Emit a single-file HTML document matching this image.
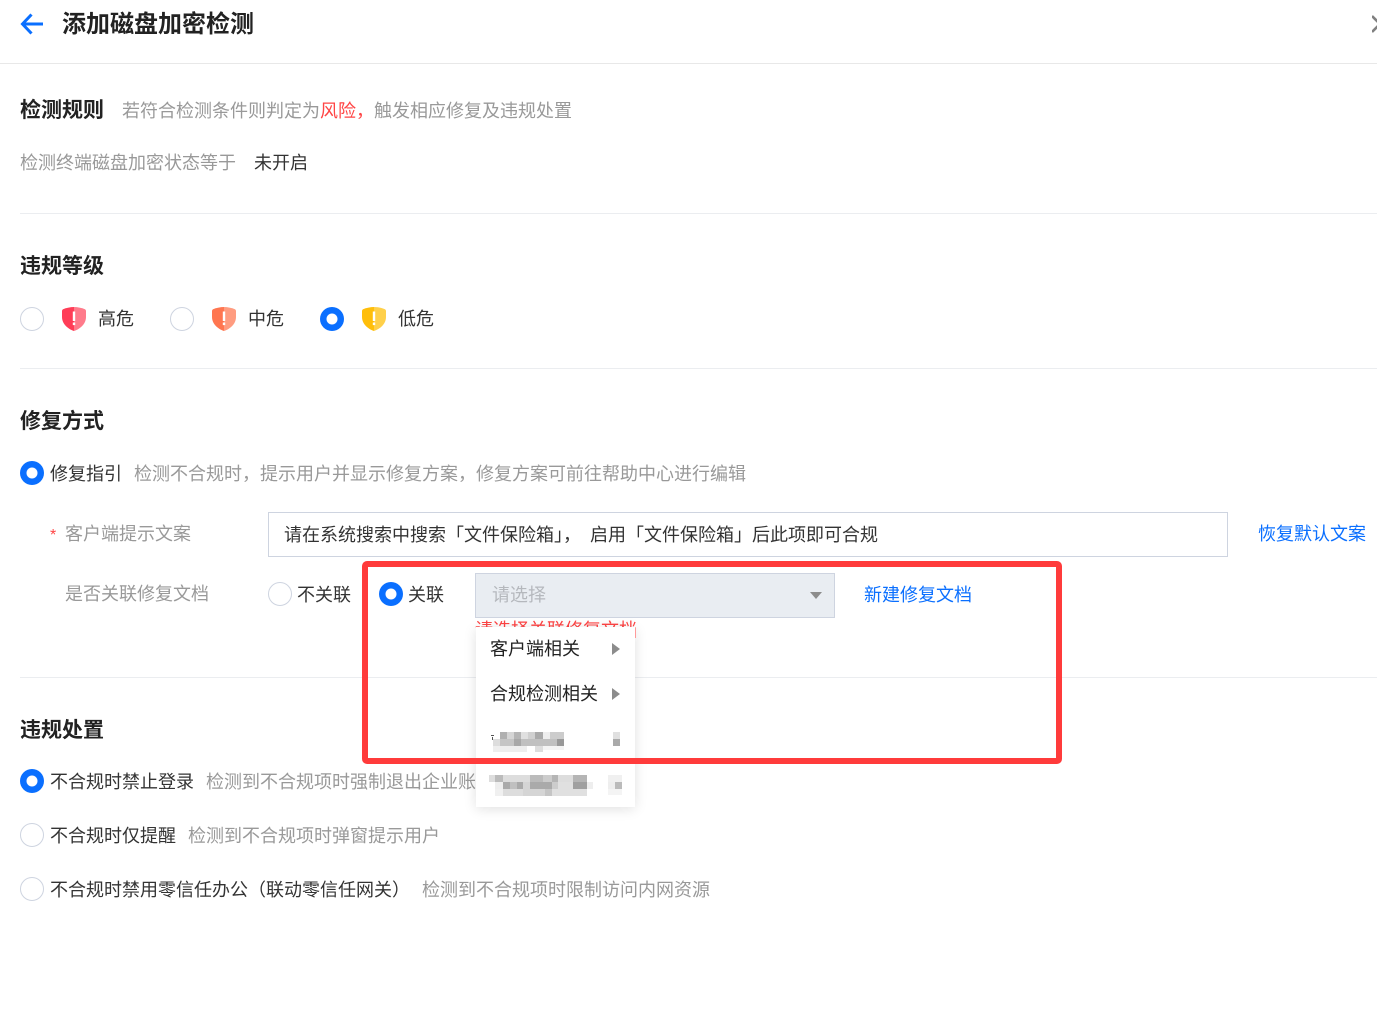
<!DOCTYPE html>
<html lang="zh-CN">
<head>
<meta charset="utf-8">
<title>添加磁盘加密检测</title>
<style>
html,body{margin:0;padding:0;background:#fff;}
body{width:1377px;height:1029px;position:relative;overflow:hidden;font-family:"Liberation Sans","Noto Sans CJK SC",sans-serif;font-size:18px;color:#333;}
.t{position:absolute;white-space:nowrap;line-height:26px;height:26px;}
.h{font-weight:700;font-size:21px;color:#222;}
.g{color:#999;}
.d{color:#333;}
.hr{position:absolute;height:1px;background:#ebedf0;left:20px;width:1357px;}
.r{position:absolute;width:24px;height:24px;box-sizing:border-box;border-radius:50%;border:1px solid #ced4e0;background:#fff;}
.r.on{border:0;background:radial-gradient(circle at 12px 12px,#fff 0,#fff 5.200px,#0a6fff 5.800px,#0a6fff 12px);}
.s{position:absolute;}
</style>
</head>
<body>
<svg class="s" style="left:20px;top:12px" width="24" height="24" viewBox="0 0 24 24"><path d="M11.500 2.500 2.500 12l9 9.500M3 12H23" fill="none" stroke="#0a6fff" stroke-width="3"/></svg>
<div class="t" style="left:62px;top:12px;font-size:24px;font-weight:700;color:#222;">添加磁盘加密检测</div>
<svg class="s" style="left:1372px;top:15px" width="5" height="18" viewBox="0 0 5 18"><path d="M0 1l8 8M0 17l8-8" fill="none" stroke="#808080" stroke-width="2.600"/></svg>
<div class="hr" style="left:0;width:1377px;top:63px;background:#e8e8e8"></div>

<div class="t h" style="left:20px;top:98px;">检测规则</div>
<div class="t g" style="left:122px;top:98px;">若符合检测条件则判定为<span style="color:#ff4444">风险，</span>触发相应修复及违规处置</div>
<div class="t g" style="left:20px;top:150px;">检测终端磁盘加密状态等于</div>
<div class="t d" style="left:254px;top:150px;">未开启</div>
<div class="hr" style="top:213px"></div>

<div class="t h" style="left:20px;top:254px;">违规等级</div>
<div class="r" style="left:20px;top:307px"></div>
<svg class="s" style="left:62px;top:307px" width="24" height="24" viewBox="0 0 24 24"><path d="M12 0C8.500 0 4.500 .8 1 2.200Q0 2.700 0 4V10C0 17 6 22 12 24z" fill="#ff3d57"/><path d="M12 0c3.500 0 7.500 .8 11 2.200Q24 2.700 24 4V10C24 17 18 22 12 24z" fill="#ff7b8b"/><rect x="10.800" y="4.500" width="2.400" height="9.500" fill="#fff"/><rect x="10.800" y="15.500" width="2.400" height="2.600" fill="#fff"/></svg>
<div class="t d" style="left:98px;top:306px;">高危</div>
<div class="r" style="left:170px;top:307px"></div>
<svg class="s" style="left:212px;top:307px" width="24" height="24" viewBox="0 0 24 24"><path d="M12 0C8.500 0 4.500 .8 1 2.200Q0 2.700 0 4V10C0 17 6 22 12 24z" fill="#ff7650"/><path d="M12 0c3.500 0 7.500 .8 11 2.200Q24 2.700 24 4V10C24 17 18 22 12 24z" fill="#ff9c80"/><rect x="10.800" y="4.500" width="2.400" height="9.500" fill="#fff"/><rect x="10.800" y="15.500" width="2.400" height="2.600" fill="#fff"/></svg>
<div class="t d" style="left:248px;top:306px;">中危</div>
<div class="r on" style="left:320px;top:307px"></div>
<svg class="s" style="left:362px;top:307px" width="24" height="24" viewBox="0 0 24 24"><path d="M12 0C8.500 0 4.500 .8 1 2.200Q0 2.700 0 4V10C0 17 6 22 12 24z" fill="#ffbe0a"/><path d="M12 0c3.500 0 7.500 .8 11 2.200Q24 2.700 24 4V10C24 17 18 22 12 24z" fill="#ffd04a"/><rect x="10.800" y="4.500" width="2.400" height="9.500" fill="#fff"/><rect x="10.800" y="15.500" width="2.400" height="2.600" fill="#fff"/></svg>
<div class="t d" style="left:398px;top:306px;">低危</div>
<div class="hr" style="top:368px"></div>

<div class="t h" style="left:20px;top:409px;">修复方式</div>
<div class="r on" style="left:20px;top:461px"></div>
<div class="t d" style="left:50px;top:461px;">修复指引</div>
<div class="t g" style="left:134px;top:461px;">检测不合规时，提示用户并显示修复方案，修复方案可前往帮助中心进行编辑</div>

<div class="t" style="left:50px;top:523px;color:#ff4444;font-size:16px;">*</div>
<div class="t g" style="left:65px;top:521px;">客户端提示文案</div>
<div class="s" style="left:268px;top:512px;width:960px;height:45px;box-sizing:border-box;border:1px solid #ced4e0;"></div>
<div class="t d" style="left:284px;top:522px;">请在系统搜索中搜索「文件保险箱」<span style="margin-right:9px">，</span>启用「文件保险箱」后此项即可合规</div>
<div class="t" style="left:1258px;top:521px;color:#0a6fff;">恢复默认文案</div>

<div class="t g" style="left:65px;top:581px;">是否关联修复文档</div>
<div class="r" style="left:268px;top:582px"></div>
<div class="t d" style="left:297px;top:582px;">不关联</div>
<div class="r on" style="left:379px;top:582px"></div>
<div class="t d" style="left:408px;top:582px;">关联</div>
<div class="s" style="left:475px;top:573px;width:360px;height:45px;box-sizing:border-box;border:1px solid #ced4e0;background:#e9edf2;"></div>
<div class="t" style="left:492px;top:582px;color:#b5b8bd;">请选择</div>
<svg class="s" style="left:810px;top:592px" width="12" height="7" viewBox="0 0 12 7"><path d="M0 0h12L6 7z" fill="#8c8c8c"/></svg>
<div class="t" style="left:864px;top:582px;color:#0a6fff;">新建修复文档</div>
<div class="t" style="left:475px;top:619px;color:#ff4444;height:9px;overflow:hidden;line-height:22px;">请选择关联修复文档</div>

<div class="hr" style="top:677px"></div>

<div class="t h" style="left:20px;top:718px;">违规处置</div>
<div class="r on" style="left:20px;top:769px"></div>
<div class="t d" style="left:50px;top:769px;">不合规时禁止登录</div>
<div class="t g" style="left:206px;top:769px;">检测到不合规项时强制退出企业账号</div>
<div class="r" style="left:20px;top:823px"></div>
<div class="t d" style="left:50px;top:823px;">不合规时仅提醒</div>
<div class="t g" style="left:188px;top:823px;">检测到不合规项时弹窗提示用户</div>
<div class="r" style="left:20px;top:877px"></div>
<div class="t d" style="left:50px;top:877px;">不合规时禁用零信任办公（联动零信任网关）</div>
<div class="t g" style="left:422px;top:877px;">检测到不合规项时限制访问内网资源</div>

<!-- dropdown -->
<div class="s" style="left:476px;top:627px;width:159px;height:180px;background:#fff;box-shadow:0 2px 12px rgba(0,0,0,.12);"></div>
<div class="t" style="left:490px;top:636px;color:#222;">客户端相关</div>
<svg class="s" style="left:612px;top:643px" width="8" height="12" viewBox="0 0 8 12"><path d="M0 0l8 6-8 6z" fill="#8c8c8c"/></svg>
<div class="t" style="left:490px;top:681px;color:#222;">合规检测相关</div>
<svg class="s" style="left:612px;top:688px" width="8" height="12" viewBox="0 0 8 12"><path d="M0 0l8 6-8 6z" fill="#8c8c8c"/></svg>

<svg class="s" style="left:480px;top:720px" width="160" height="90" viewBox="0 0 160 90" shape-rendering="crispEdges">
<rect x="11" y="15" width="3" height="1" fill="#555"/>
<rect x="12" y="17" width="1" height="3" fill="#555"/>
<!-- first blurred row -->
<rect x="20" y="12" width="7" height="7" fill="#b0b0b0"/><rect x="27" y="12" width="7" height="7" fill="#d5d5d5"/><rect x="34" y="12" width="7" height="7" fill="#b5b5b5"/><rect x="41" y="12" width="7" height="7" fill="#e0e0e0"/><rect x="48" y="12" width="7" height="7" fill="#d0d0d0"/><rect x="55" y="12" width="8" height="7" fill="#aaaaaa"/><rect x="63" y="12" width="7" height="7" fill="#eeeeee"/><rect x="70" y="12" width="14" height="7" fill="#cccccc"/>
<rect x="13" y="19" width="7" height="7" fill="#dddddd"/><rect x="20" y="19" width="14" height="7" fill="#c5c5c5"/><rect x="34" y="19" width="7" height="7" fill="#a8a8a8"/><rect x="41" y="19" width="36" height="7" fill="#c0c0c0"/><rect x="77" y="19" width="7" height="7" fill="#999999"/>
<rect x="13" y="26" width="34" height="6" fill="#eeeeee"/><rect x="55" y="26" width="8" height="6" fill="#dddddd"/><rect x="63" y="26" width="21" height="4" fill="#f4f4f4"/>
<rect x="133" y="12" width="7" height="7" fill="#e0e0e0"/><rect x="133" y="19" width="7" height="7" fill="#aaaaaa"/>
<!-- second blurred row -->
<rect x="9" y="55" width="6" height="7" fill="#dddddd"/><rect x="15" y="55" width="8" height="7" fill="#bbbbbb"/><rect x="23" y="55" width="27" height="7" fill="#dddddd"/><rect x="50" y="55" width="13" height="7" fill="#bbbbbb"/><rect x="63" y="55" width="9" height="7" fill="#cccccc"/><rect x="72" y="55" width="6" height="7" fill="#b5b5b5"/><rect x="78" y="55" width="15" height="7" fill="#dddddd"/><rect x="93" y="55" width="14" height="7" fill="#b5b5b5"/>
<rect x="15" y="62" width="8" height="7" fill="#eeeeee"/><rect x="23" y="62" width="7" height="7" fill="#aaaaaa"/><rect x="30" y="62" width="7" height="7" fill="#c0c0c0"/><rect x="37" y="62" width="6" height="7" fill="#aaaaaa"/><rect x="43" y="62" width="7" height="7" fill="#d5d5d5"/><rect x="50" y="62" width="22" height="7" fill="#aaaaaa"/><rect x="72" y="62" width="6" height="7" fill="#cccccc"/><rect x="78" y="62" width="15" height="7" fill="#e0e0e0"/><rect x="93" y="62" width="14" height="7" fill="#a0a0a0"/><rect x="107" y="62" width="6" height="7" fill="#eeeeee"/>
<rect x="15" y="69" width="8" height="7" fill="#f0f0f0"/><rect x="23" y="69" width="20" height="7" fill="#dddddd"/><rect x="43" y="69" width="22" height="7" fill="#d5d5d5"/><rect x="65" y="69" width="7" height="7" fill="#c5c5c5"/><rect x="72" y="69" width="35" height="7" fill="#e0e0e0"/>
<rect x="128" y="55" width="14" height="7" fill="#f0f0f0"/><rect x="128" y="62" width="7" height="7" fill="#eeeeee"/><rect x="135" y="62" width="7" height="7" fill="#bbbbbb"/><rect x="128" y="69" width="14" height="6" fill="#f4f4f4"/>
</svg>

<!-- red highlight -->
<div class="s" style="left:362px;top:561px;width:700px;height:203px;box-sizing:border-box;border:6px solid #ff3b3b;border-radius:5px;"></div>
<div class="s" style="left:635px;top:628px;width:1px;height:10px;background:#ff9a9a;"></div>
</body>
</html>
